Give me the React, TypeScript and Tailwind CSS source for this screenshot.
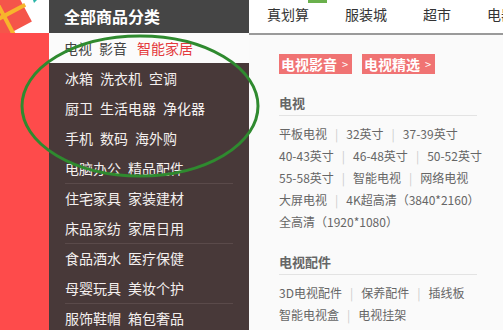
const navItems = ["真划算", "服装城", "超市", "电器城"];

const menuRows: { words: string[]; sep?: boolean }[] = [
  { words: ["冰箱", "洗衣机", "空调"] },
  { words: ["厨卫", "生活电器", "净化器"] },
  { words: ["手机", "数码", "海外购"] },
  { words: ["电脑办公", "精品配件"] },
  { words: ["住宅家具", "家装建材"], sep: true },
  { words: ["床品家纺", "家居日用"] },
  { words: ["食品酒水", "医疗保健"], sep: true },
  { words: ["母婴玩具", "美妆个护"] },
  { words: ["服饰鞋帽", "箱包奢品"], sep: true },
];

const tvLinks = [
  ["平板电视", "32英寸", "37-39英寸"],
  ["40-43英寸", "46-48英寸", "50-52英寸"],
  ["55-58英寸", "智能电视", "网络电视"],
  ["大屏电视", "4K超高清（3840*2160）"],
  ["全高清（1920*1080）"],
];

const accLinks = [
  ["3D电视配件", "保养配件", "插线板"],
  ["智能电视盒", "电视挂架"],
];

function LinkRows({ rows }: { rows: string[][] }) {
  return (
    <div className="flex flex-col">
      {rows.map((row, i) => (
        <div key={i} className="h-[22px] flex items-center whitespace-nowrap text-[12px] text-[#666]">
          {row.map((t, j) => (
            <span key={t} className="flex items-center">
              {j > 0 && <span className="mx-[8px] text-[#ccc]">|</span>}
              {t}
            </span>
          ))}
        </div>
      ))}
    </div>
  );
}

function Gift() {
  return (
    <svg width="49" height="33" viewBox="0 0 49 33">
      <rect width="49" height="33" fill="#fff" />
      <g transform="rotate(-28 12 14)">
        <rect x="-8" y="-4" width="34" height="34" fill="#f5554a" />
        <rect x="2" y="-6" width="4" height="40" fill="#f7b52c" />
        <rect x="-10" y="10" width="38" height="4" fill="#f7b52c" />
      </g>
      <path d="M33 0 L37 0 L34 3 Z" fill="#2bb5a8" />
    </svg>
  );
}

export default function App() {
  return (
    <div
      className="relative w-[503px] h-[330px] overflow-hidden bg-[#fafafa]"
      style={{ fontFamily: '"Noto Sans CJK SC", "Noto Sans", sans-serif' }}
    >
      <div className="flex h-[33px]">
        <div className="w-[49px] shrink-0">
          <Gift />
        </div>
        <div className="w-[200px] shrink-0 bg-[#454545] flex items-center pl-[15px] pb-[2px] text-white font-bold text-[16px]">
          全部商品分类
        </div>
        <div className="relative flex-1 bg-white flex items-center pl-[18px] gap-[36px] pb-[4px] whitespace-nowrap text-[14px] text-[#333]">
          <span className="absolute left-[59px] top-0 w-[19px] h-[3px] bg-[#6ab04c]" />
          {navItems.map((n) => (
            <span key={n}>{n}</span>
          ))}
        </div>
      </div>

      <div className="flex h-[297px]">
        <div className="w-[49px] shrink-0 bg-[#fe4b4b]" />
        <div className="w-[200px] shrink-0 bg-[#483939] text-[14px]">
          <div className="h-[30px] bg-[#fbfbfb] flex items-center pl-[15px] gap-[7px]">
            <span className="text-[#444]">电视</span>
            <span className="text-[#444]">影音</span>
            <span className="text-[#e4393c] ml-[3px]">智能家居</span>
          </div>
          {menuRows.map((r, i) => (
            <div key={i} className="h-[30px] px-[16px]">
              <div
                className={
                  r.sep
                    ? "h-full border-t border-[#5a4a4a] flex items-center gap-[7px] text-[#f4f0ef]"
                    : "h-full flex items-center gap-[7px] text-[#f4f0ef]"
                }
              >
                {r.words.map((w) => (
                  <span key={w}>{w}</span>
                ))}
              </div>
            </div>
          ))}
        </div>

        <div className="flex-1 border-t-2 border-[#9a9a9a] pl-[30px] pt-[19px]">
          <div className="flex gap-[10px]">
            <span className="h-[20px] w-[73px] bg-[#f07373] text-white font-bold text-[14px] flex items-center pl-[2px] gap-[5px]">
              电视影音<span className="text-[11px] font-normal">&gt;</span>
            </span>
            <span className="h-[20px] w-[73px] bg-[#f07373] text-white font-bold text-[14px] flex items-center pl-[2px] gap-[5px]">
              电视精选<span className="text-[11px] font-normal">&gt;</span>
            </span>
          </div>

          <div className="w-[198px] mt-[19px] h-[23px] border-b border-[#e3e3e3] text-[13px] font-bold text-[#666]">
            电视
          </div>
          <div className="mt-[7px]">
            <LinkRows rows={tvLinks} />
          </div>

          <div className="w-[198px] mt-[19px] h-[23px] border-b border-[#e3e3e3] text-[13px] font-bold text-[#666]">
            电视配件
          </div>
          <div className="mt-[7px]">
            <LinkRows rows={accLinks} />
          </div>
        </div>
      </div>

      <svg className="absolute left-0 top-0 pointer-events-none" width="503" height="330">
        <ellipse cx="140" cy="106" rx="118" ry="70" fill="none" stroke="#2f8a2f" strokeWidth="3" />
      </svg>
    </div>
  );
}
